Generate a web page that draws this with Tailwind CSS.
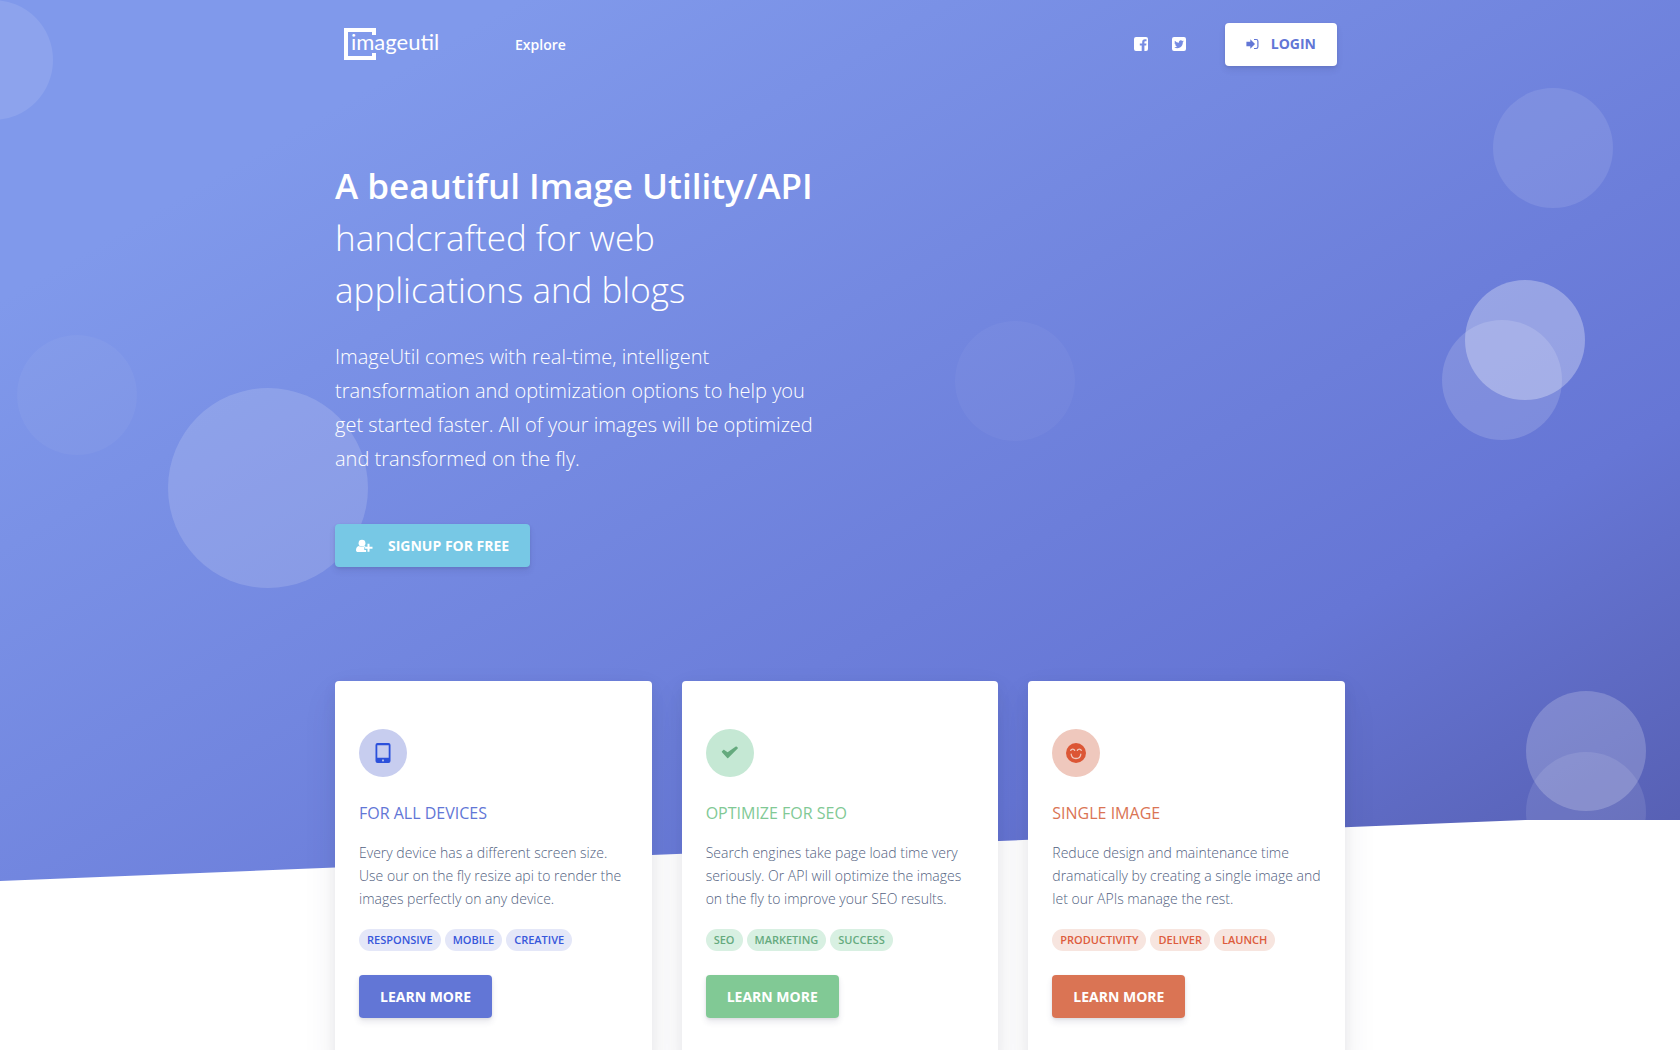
<!DOCTYPE html>
<html lang="en">
<head>
<meta charset="utf-8">
<meta name="viewport" content="width=device-width, initial-scale=1">
<title>imageutil</title>
<script src="https://cdn.jsdelivr.net/npm/@tailwindcss/browser@4"></script>
</head>
<body class="bg-white font-['Open_Sans',sans-serif] text-[#525f7f]">
<div class="relative min-h-screen overflow-hidden">

  <!-- Slanted gradient backdrop with floating circles -->
  <div aria-hidden="true" class="absolute inset-x-0 top-0 h-[881px] bg-[linear-gradient(150deg,#8099eb_260px,#6676d5_1200px,#545bac_1640px)] [clip-path:polygon(0_0,100%_0,100%_820px,90.8%_820px,0_100%)]">
    <span class="absolute -left-[4%] top-0 size-[120px] rounded-full bg-white/10"></span>
    <span class="absolute left-[1%] top-[335px] size-[120px] rounded-full bg-white/4"></span>
    <span class="absolute left-[10%] top-[388px] size-[200px] rounded-full bg-white/15"></span>
    <span class="absolute left-[955px] top-[321px] size-[120px] rounded-full bg-white/4"></span>
    <span class="absolute right-[4%] top-[88px] size-[120px] rounded-full bg-white/10"></span>
    <span class="absolute right-[95px] top-[280px] size-[120px] rounded-full bg-white/30"></span>
    <span class="absolute right-[7%] top-[320px] size-[120px] rounded-full bg-white/15"></span>
    <span class="absolute right-[2%] top-[691px] size-[120px] rounded-full bg-white/20"></span>
    <span class="absolute right-[2%] top-[752px] size-[120px] rounded-full bg-white/10"></span>
  </div>

  <header class="relative mx-auto flex h-[88px] max-w-[1010px] items-center px-2 text-white">
    <a href="#" aria-label="imageutil home" class="mr-[76px]">
      <svg class="block h-8 w-24" viewBox="0 0 96 32" fill="currentColor">
        <path d="M1 0h32v7h-4V4H5v24h24v-3h4v7H1z"/>
        <text x="8" y="22" font-family="Lato, sans-serif" font-size="22">imageutil</text>
      </svg>
    </a>
    <nav class="flex-1"><a href="#" class="text-sm font-semibold">Explore</a></nav>
    <a href="#" aria-label="Facebook" class="mr-6">
      <svg class="block size-[14px]" viewBox="0 0 14 14" fill="currentColor"><path d="M2 0h10a2 2 0 0 1 2 2v10a2 2 0 0 1-2 2h-1.600V8.600h1.800l.3-2.100h-2.100V5.200c0-.6.2-1 1-1h1.100V2.300c-.2 0-.9-.1-1.600-.1-1.700 0-2.700 1-2.700 2.800v1.500H5.800v2.100h1.900V14H2a2 2 0 0 1-2-2V2a2 2 0 0 1 2-2z"/></svg>
    </a>
    <a href="#" aria-label="Twitter" class="mr-[39px]">
      <svg class="block size-[14px]" viewBox="0 0 14 14" fill="currentColor" fill-rule="evenodd"><path d="M2 0h10a2 2 0 0 1 2 2v10a2 2 0 0 1-2 2H2a2 2 0 0 1-2-2V2a2 2 0 0 1 2-2zm9.800 4.200c-.3.200-.7.300-1.100.3.400-.2.700-.6.800-1-.4.200-.8.400-1.200.5a2 2 0 0 0-3.400 1.800 5.500 5.500 0 0 1-4-2.100 2 2 0 0 0 .6 2.700c-.3 0-.6-.1-.9-.3 0 1 .7 1.800 1.600 2-.3.100-.6.100-.9 0 .2.800 1 1.400 1.800 1.400a4 4 0 0 1-2.900.8 5.600 5.600 0 0 0 8.600-5c.4-.3.700-.6 1-1.100z"/></svg>
    </a>
    <button type="button" class="flex h-[43px] items-center gap-3 rounded bg-white px-[21px] text-sm font-bold text-[#6276d6] shadow-[0_4px_6px_rgba(50,50,93,0.11),0_1px_3px_rgba(0,0,0,0.08)]">
      <svg class="h-3 w-[13px]" viewBox="0 0 13 12" fill="currentColor"><path d="M4.300 1.200 9 6l-4.700 4.800V8.200H.4V3.800h3.900z"/><path d="M8 1h2.200A2.300 2.300 0 0 1 12.500 3.300v5.400A2.300 2.300 0 0 1 10.200 11H8v-1.100h2.100c.7 0 1.200-.5 1.200-1.200V3.300c0-.7-.5-1.200-1.200-1.200H8z"/></svg>
      LOGIN
    </button>
  </header>

  <main class="relative mx-auto max-w-[1010px]">
    <section class="max-w-[490px] pt-[72px] text-white">
      <h1 class="text-[35px] leading-[52px] font-light"><span class="block font-semibold">A beautiful Image Utility/API</span>handcrafted for web applications and blogs</h1>
      <p class="mt-6 text-xl leading-[34px] font-light">ImageUtil comes with real-time, intelligent transformation and optimization options to help you get started faster. All of your images will be optimized and transformed on the fly.</p>
      <button type="button" class="mt-12 flex h-[43px] items-center gap-[14px] rounded bg-[#77c8e5] px-[21px] text-sm font-bold shadow-[0_4px_6px_rgba(50,50,93,0.11),0_1px_3px_rgba(0,0,0,0.08)]">
        <svg class="h-[14px] w-[18px]" viewBox="0 0 18 14" fill="currentColor"><circle cx="6" cy="4.200" r="3.400"/><path d="M2.900 6.900C.9 7.300 0 9 0 11.200c0 1 .8 1.800 1.900 1.800h8.200V11H8.300V8.300h1.400c-.2-.7-.6-1.200-1.100-1.400-1.600 1.500-4 1.500-5.700 0z"/><path d="M11.500 4.700h2v3h3v2h-3v3h-2v-3H9.100v-2h2.400z"/></svg>
        SIGNUP FOR FREE
      </button>
    </section>

    <section class="mt-[114px] grid grid-cols-3 gap-[30px]">
      <article class="rounded bg-white px-6 py-12 shadow-[0_15px_35px_rgba(50,50,93,0.08),0_5px_15px_rgba(0,0,0,0.06)]">
        <div class="flex size-12 items-center justify-center rounded-full bg-[#c7cdef] text-[#2b50db]">
          <svg class="size-5" viewBox="0 0 20 20" fill="currentColor" fill-rule="evenodd"><path d="M4.500 0h11A2 2 0 0 1 17.500 2v16a2 2 0 0 1-2 2h-11a2 2 0 0 1-2-2V2a2 2 0 0 1 2-2zM4.300 2.200h11.400v12.600H4.300zM10 16.600a.9.9 0 1 0 .01 0z"/></svg>
        </div>
        <h2 class="mt-6 text-base leading-6 text-[#6276d6]">FOR ALL DEVICES</h2>
        <p class="mt-4 text-sm leading-[23px] font-light">Every device has a different screen size. Use our on the fly resize api to render the images perfectly on any device.</p>
        <div class="mt-[19px] flex gap-1 text-[11px] leading-[22px] font-semibold text-[#3757db]">
          <span class="rounded-full bg-[#e4e7f8] px-2">RESPONSIVE</span>
          <span class="rounded-full bg-[#e4e7f8] px-2">MOBILE</span>
          <span class="rounded-full bg-[#e4e7f8] px-2">CREATIVE</span>
        </div>
        <button type="button" class="mt-6 h-[43px] rounded bg-[#6276d6] px-[21px] text-sm font-bold text-white shadow-[0_4px_6px_rgba(50,50,93,0.11),0_1px_3px_rgba(0,0,0,0.08)]">LEARN MORE</button>
      </article>

      <article class="rounded bg-white px-6 py-12 shadow-[0_15px_35px_rgba(50,50,93,0.08),0_5px_15px_rgba(0,0,0,0.06)]">
        <div class="flex size-12 items-center justify-center rounded-full bg-[#c5e8d4] text-[#65aa7e]">
          <svg class="size-5" viewBox="0 0 20 20" fill="currentColor"><path d="M2 8.300 3.300 7c.3-.3.700-.3 1-.1l3.300 2.300 8.200-5.600c.3-.2.700-.2 1 .1l.9.900c.3.300.3.700 0 1L8.200 15.100c-.3.300-.7.300-1 0L2 9.300c-.3-.3-.3-.7 0-1z"/></svg>
        </div>
        <h2 class="mt-6 text-base leading-6 text-[#81c995]">OPTIMIZE FOR SEO</h2>
        <p class="mt-4 text-sm leading-[23px] font-light">Search engines take page load time very seriously. Or API will optimize the images on the fly to improve your SEO results.</p>
        <div class="mt-[19px] flex gap-1 text-[11px] leading-[22px] font-semibold text-[#65aa7e]">
          <span class="rounded-full bg-[#d8f0e2] px-2">SEO</span>
          <span class="rounded-full bg-[#d8f0e2] px-2">MARKETING</span>
          <span class="rounded-full bg-[#d8f0e2] px-2">SUCCESS</span>
        </div>
        <button type="button" class="mt-6 h-[43px] rounded bg-[#81c995] px-[21px] text-sm font-bold text-white shadow-[0_4px_6px_rgba(50,50,93,0.11),0_1px_3px_rgba(0,0,0,0.08)]">LEARN MORE</button>
      </article>

      <article class="rounded bg-white px-6 py-12 shadow-[0_15px_35px_rgba(50,50,93,0.08),0_5px_15px_rgba(0,0,0,0.06)]">
        <div class="flex size-12 items-center justify-center rounded-full bg-[#efc8bd] text-[#dc5635]">
          <svg class="size-5" viewBox="0 0 20 20"><circle cx="10" cy="10" r="10" fill="currentColor"/><path d="M4.700 7.400c.8-1.700 3.200-1.700 4 0M11.300 7.400c.8-1.700 3.200-1.700 4 0M5.200 11.200c.5 5.700 9.100 5.700 9.600 0" fill="none" stroke="#efc8bd" stroke-width="1.300" stroke-linecap="round"/></svg>
        </div>
        <h2 class="mt-6 text-base leading-6 text-[#da7454]">SINGLE IMAGE</h2>
        <p class="mt-4 text-sm leading-[23px] font-light">Reduce design and maintenance time dramatically by creating a single image and let our APIs manage the rest.</p>
        <div class="mt-[19px] flex gap-1 text-[11px] leading-[22px] font-semibold text-[#dd5c3c]">
          <span class="rounded-full bg-[#f7e5df] px-2">PRODUCTIVITY</span>
          <span class="rounded-full bg-[#f7e5df] px-2">DELIVER</span>
          <span class="rounded-full bg-[#f7e5df] px-2">LAUNCH</span>
        </div>
        <button type="button" class="mt-6 h-[43px] rounded bg-[#da7454] px-[21px] text-sm font-bold text-white shadow-[0_4px_6px_rgba(50,50,93,0.11),0_1px_3px_rgba(0,0,0,0.08)]">LEARN MORE</button>
      </article>
    </section>
  </main>
</div>
</body>
</html>
